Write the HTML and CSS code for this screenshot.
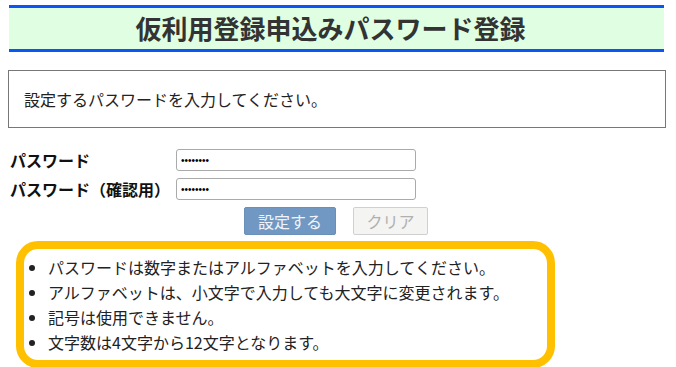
FILE: index.html
```html
<!DOCTYPE html>
<html lang="ja">
  <head>
    <meta charset="UTF-8" />
    <meta name="viewport" content="width=device-width, initial-scale=1.0" />
    <title>仮利用登録申込みパスワード登録</title>
    <link rel="stylesheet" href="styles.css">
  </head>
  <body>
    <div class="page">
      <h1 class="title">仮利用登録申込みパスワード登録</h1>

      <div class="notice">設定するパスワードを入力してください。</div>

      <form class="pw-form" onsubmit="return false;">
        <div class="pw-row">
          <label for="pw1">パスワード</label>
          <input type="password" id="pw1" value="abcdefgh" />
        </div>
        <div class="pw-row">
          <label for="pw2">パスワード（確認用）</label>
          <input type="password" id="pw2" value="abcdefgh" />
        </div>
        <div class="buttons">
          <button type="submit" class="btn btn-set">設定する</button>
          <button type="reset" class="btn btn-clear">クリア</button>
        </div>
      </form>

      <div class="rules">
        <ul>
          <li>パスワードは数字またはアルファベットを入力してください。</li>
          <li>アルファベットは、小文字で入力しても大文字に変更されます。</li>
          <li>記号は使用できません。</li>
          <li>文字数は4文字から12文字となります。</li>
        </ul>
      </div>
    </div>
  </body>
</html>
```

FILE: styles.css
```css
* {
  margin: 0;
  padding: 0;
  box-sizing: border-box;
}
html, body {
  height: 100%;
  background: #fff;
  color: #222;
  font-family: "Noto Sans CJK JP", "Noto Sans", sans-serif;
  overflow: hidden;
}
.page {
  padding: 5px 10px 0 8px;
}
.title {
  margin: 0 2px 0 1px;
  height: 47px;
  border-top: 3px solid #0a55f5;
  border-bottom: 3px solid #0a55f5;
  background: #e0ffe2;
  color: #333;
  font-size: 26px;
  font-weight: bold;
  line-height: 40px;
  text-align: center;
  padding-right: 12px;
}
.notice {
  margin-top: 18px;
  height: 58px;
  border: 1px solid #777;
  padding-left: 15px;
  font-size: 16px;
  line-height: 56px;
  color: #222;
}
.pw-form {
  margin-top: 21px;
}
.pw-row {
  display: flex;
  align-items: center;
  height: 22px;
  margin-bottom: 7px;
}
.pw-row label {
  width: 168px;
  padding-left: 2px;
  font-size: 16px;
  font-weight: bold;
  color: #111;
}
.pw-row input {
  width: 240px;
  height: 22px;
  border: 1px solid #aaa;
  border-radius: 3px;
  padding: 0 4px;
  font-size: 10px;
  color: #000;
  outline: none;
}
.buttons {
  display: flex;
  justify-content: center;
  gap: 17px;
  padding-right: 2px;
  margin-top: 4px;
}
.btn {
  height: 28px;
  font-family: inherit;
  font-size: 16px;
  border-radius: 2px;
  cursor: pointer;
}
.btn-set {
  width: 92px;
  background: #7198c2;
  border: 1px solid #6a8fb8;
  color: #f0f4fa;
}
.btn-clear {
  width: 75px;
  background: #f4f4f2;
  border: 1px solid #d0d0d0;
  color: #b0b0b0;
}
.rules {
  margin: 6px 0 0 8px;
  width: 539px;
  border: 8px solid #ffc000;
  border-radius: 22px;
  padding: 6px 0 5px 24px;
}
.rules ul {
  list-style: disc;
}
.rules li {
  font-size: 16px;
  line-height: 25px;
  color: #222;
}
```
